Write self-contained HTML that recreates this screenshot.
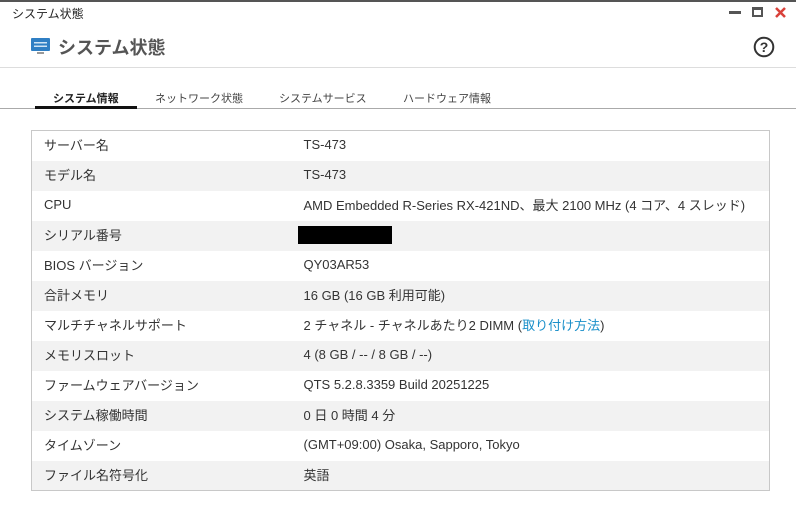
<!DOCTYPE html>
<html><head><meta charset="utf-8"><style>
*{margin:0;padding:0;box-sizing:border-box}
body{width:796px;height:505px;background:#fff;font-family:"Liberation Sans","Noto Sans CJK JP",sans-serif;color:#333;position:relative;overflow:hidden}
.top{position:absolute;left:0;top:0;width:796px;height:2px;background:#555}
.wt{position:absolute;left:12px;top:5px;font-size:12px;color:#222}
.ctl{position:absolute;top:6px}
.hdr{position:absolute;left:58px;top:34px;font-size:18px;font-weight:bold;color:#555}
.sep1{position:absolute;left:0;top:67px;width:796px;height:1px;background:#ddd}
.tab{position:absolute;top:90px;font-size:11px;color:#444}
.tabline{position:absolute;left:0;top:108px;width:796px;height:1px;background:#aaa}
.act{position:absolute;left:35px;top:106px;width:102px;height:3px;background:#111}
table{position:absolute;left:31px;top:130px;width:739px;border:1px solid #c8c8c8;border-collapse:collapse;font-size:13px}
td{height:30px;padding:0 0 2px 0;vertical-align:middle}
td.l{padding-left:12px;width:272px}
tr:nth-child(even){background:#f2f2f2}
a{color:#1a8fc9;text-decoration:none}
</style></head><body>
<div class="top"></div>
<div class="wt">システム状態</div>
<div class="ctl" style="left:729px;top:11px;width:12px;height:3px;background:#555"></div>
<div class="ctl" style="left:752px;top:7px;width:11px;height:10px;border:2px solid #555;border-top-width:3px"></div>
<svg class="ctl" style="left:774px;top:6px" width="13" height="13"><path d="M2 2L11 11M11 2L2 11" stroke="#d9413a" stroke-width="2.5"/></svg>
<svg style="position:absolute;left:31px;top:38px" width="19" height="17"><rect x="0" y="0" width="19" height="13" rx="1" fill="#2f7fc4"/><rect x="3" y="4" width="13" height="1.5" fill="#cfe4f5"/><rect x="3" y="7.5" width="13" height="1.5" fill="#cfe4f5"/><rect x="6" y="14" width="7" height="2" fill="#999"/></svg>
<div class="hdr">システム状態</div>
<svg style="position:absolute;left:753px;top:36px" width="22" height="22"><circle cx="11" cy="11" r="9.3" fill="none" stroke="#333" stroke-width="2"/><text x="11" y="16" text-anchor="middle" font-size="14" font-weight="bold" fill="#333" font-family="Liberation Sans">?</text></svg>
<div class="sep1"></div>
<div class="tab" style="left:53px;font-weight:bold;color:#222">システム情報</div>
<div class="tab" style="left:155px">ネットワーク状態</div>
<div class="tab" style="left:279px">システムサービス</div>
<div class="tab" style="left:403px">ハードウェア情報</div>
<div class="tabline"></div>
<div class="act"></div>
<table>
<tr><td class="l">サーバー名</td><td>TS-473</td></tr>
<tr><td class="l">モデル名</td><td>TS-473</td></tr>
<tr><td class="l">CPU</td><td>AMD Embedded R-Series RX-421ND、最大 2100 MHz (4 コア、4 スレッド)</td></tr>
<tr><td class="l">シリアル番号</td><td><div style="margin-left:-6px;width:94px;height:18px;background:#000"></div></td></tr>
<tr><td class="l">BIOS バージョン</td><td>QY03AR53</td></tr>
<tr><td class="l">合計メモリ</td><td>16 GB (16 GB 利用可能)</td></tr>
<tr><td class="l">マルチチャネルサポート</td><td>2 チャネル - チャネルあたり2 DIMM (<a>取り付け方法</a>)</td></tr>
<tr><td class="l">メモリスロット</td><td>4 (8 GB / -- / 8 GB / --)</td></tr>
<tr><td class="l">ファームウェアバージョン</td><td>QTS 5.2.8.3359 Build 20251225</td></tr>
<tr><td class="l">システム稼働時間</td><td>0 日 0 時間 4 分</td></tr>
<tr><td class="l">タイムゾーン</td><td>(GMT+09:00) Osaka, Sapporo, Tokyo</td></tr>
<tr><td class="l">ファイル名符号化</td><td>英語</td></tr>
</table>
</body></html>
